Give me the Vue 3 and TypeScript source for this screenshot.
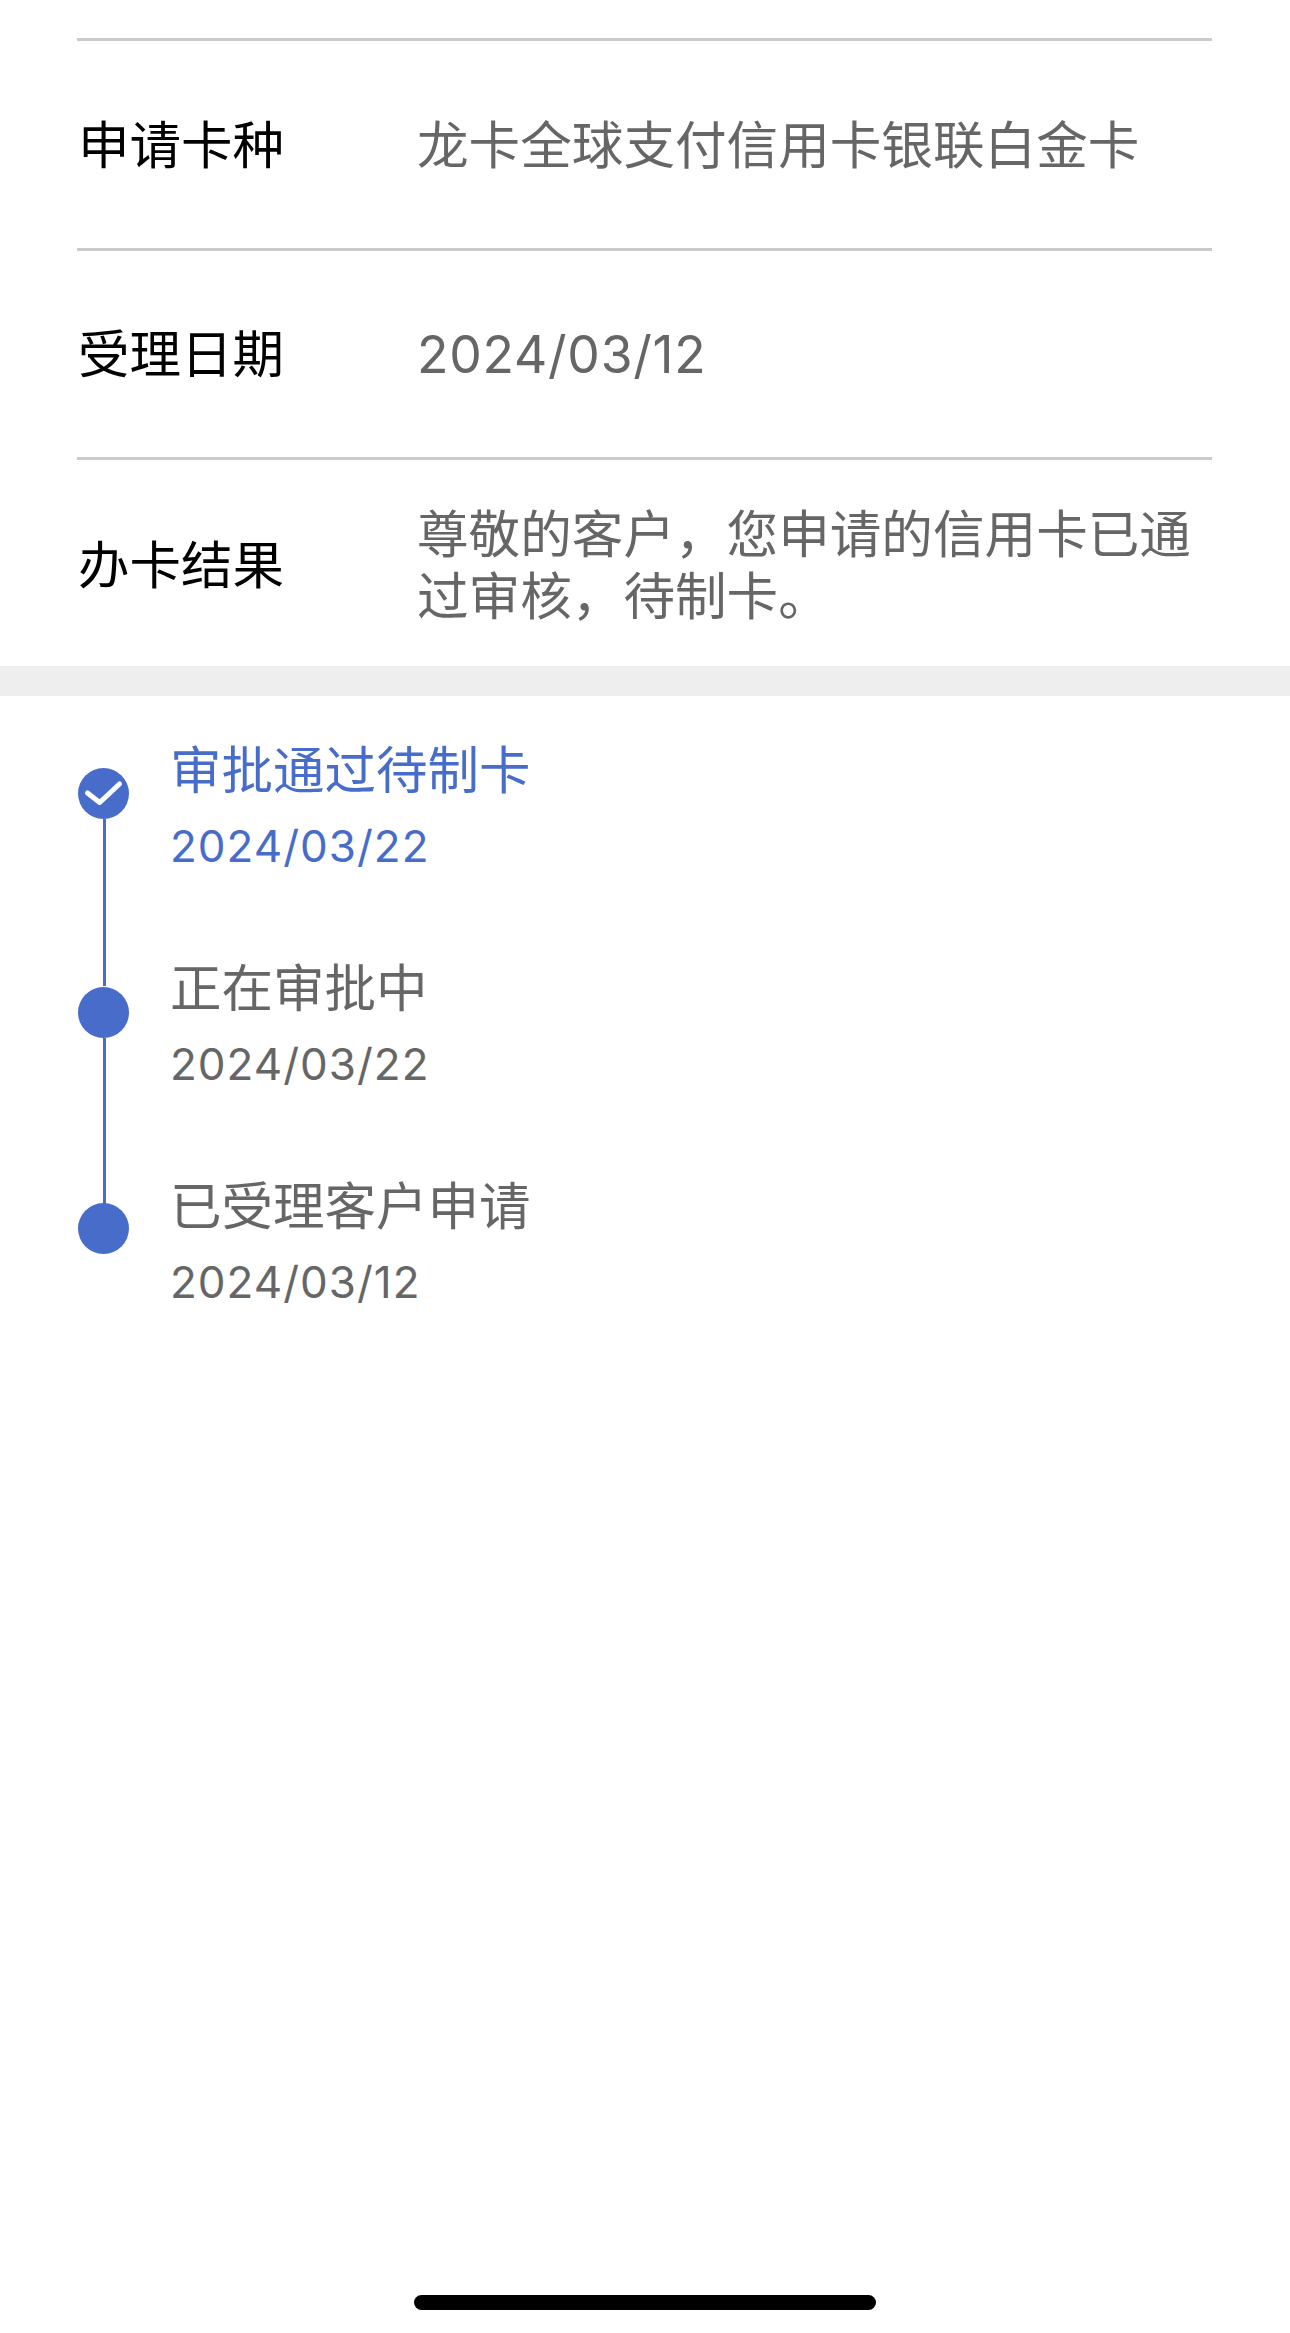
<script setup lang="ts">
interface Row { label: string; value: string; numeric?: boolean }
interface Step { title: string; date: string; done?: boolean }
const rows: Row[] = [
  { label: '申请卡种', value: '龙卡全球支付信用卡银联白金卡' },
  { label: '受理日期', value: '2024/03/12', numeric: true },
  { label: '办卡结果', value: '尊敬的客户，您申请的信用卡已通过审核，待制卡。' },
]
const steps: Step[] = [
  { title: '审批通过待制卡', date: '2024/03/22', done: true },
  { title: '正在审批中', date: '2024/03/22' },
  { title: '已受理客户申请', date: '2024/03/12' },
]
</script>

<template>
  <div class="page">
    <section class="info">
      <div v-for="r in rows" :key="r.label" class="row">
        <div class="label">{{ r.label }}</div>
        <div class="value" :class="{ numeric: r.numeric }">{{ r.value }}</div>
      </div>
    </section>
    <div class="band"></div>
    <section class="timeline">
      <div v-for="(s, i) in steps" :key="i" class="step" :class="{ active: s.done }">
        <div class="marker">
          <div class="dot">
            <svg v-if="s.done" width="51" height="51" viewBox="0 0 51 51">
              <path d="M9.5 25 L21.7 34.5 L41.5 16" fill="none" stroke="#fff" stroke-width="5" stroke-linecap="round" stroke-linejoin="round" />
            </svg>
          </div>
          <div v-if="i < steps.length - 1" class="line"></div>
        </div>
        <div class="texts">
          <div class="title">{{ s.title }}</div>
          <div class="date">{{ s.date }}</div>
        </div>
      </div>
    </section>
    <div class="home"></div>
  </div>
</template>

<style scoped>
.page {
  width: 1290px;
  height: 2333px;
  background: #fff;
  display: flex;
  flex-direction: column;
  overflow: hidden;
  font-family: Inter, "Noto Sans CJK SC", sans-serif;
}
.info {
  padding: 38px 78px 0 77px;
}
.row {
  height: 209px;
  border-top: 3px solid #cbcbcb;
  box-sizing: border-box;
  display: flex;
  align-items: center;
  padding-left: 1px;
}
.row:first-child {
  height: 210px;
}
.row:last-child {
  padding-top: 3px;
}
.label {
  width: 339px;
  flex: none;
  font-size: 51.5px;
  line-height: 62px;
  color: #000;
}
.value {
  flex: 1;
  font-size: 51.6px;
  line-height: 62px;
  color: #666;
}
.value.numeric {
  letter-spacing: 0.75px;
}
.band {
  height: 30px;
  background: #eeeeee;
}
.timeline {
  padding: 43px 78px 0;
}
.step {
  display: flex;
  height: 218px;
}
.marker {
  width: 51px;
  flex: none;
  padding-top: 29px;
  display: flex;
  flex-direction: column;
}
.dot {
  width: 51px;
  height: 51px;
  flex: none;
  border-radius: 50%;
  background: #486cca;
}
.step:nth-child(2) .dot {
  margin-top: 1px;
}
.step:nth-child(3) .dot {
  margin-top: -1px;
}
.dot svg {
  display: block;
}
.line {
  flex: 1;
  width: 3px;
  margin-left: 25px;
  background: #486cca;
  margin-bottom: -29px;
}
.texts {
  margin-left: 41px;
  color: #666;
}
.active .texts {
  color: #486cca;
}
.title {
  font-size: 51.5px;
  line-height: 62px;
}
.date {
  font-size: 44px;
  letter-spacing: 1px;
  line-height: 54px;
  margin-top: 18px;
}
.home {
  width: 462px;
  height: 15px;
  border-radius: 8px;
  background: #000;
  margin: auto auto 23px;
}
</style>
